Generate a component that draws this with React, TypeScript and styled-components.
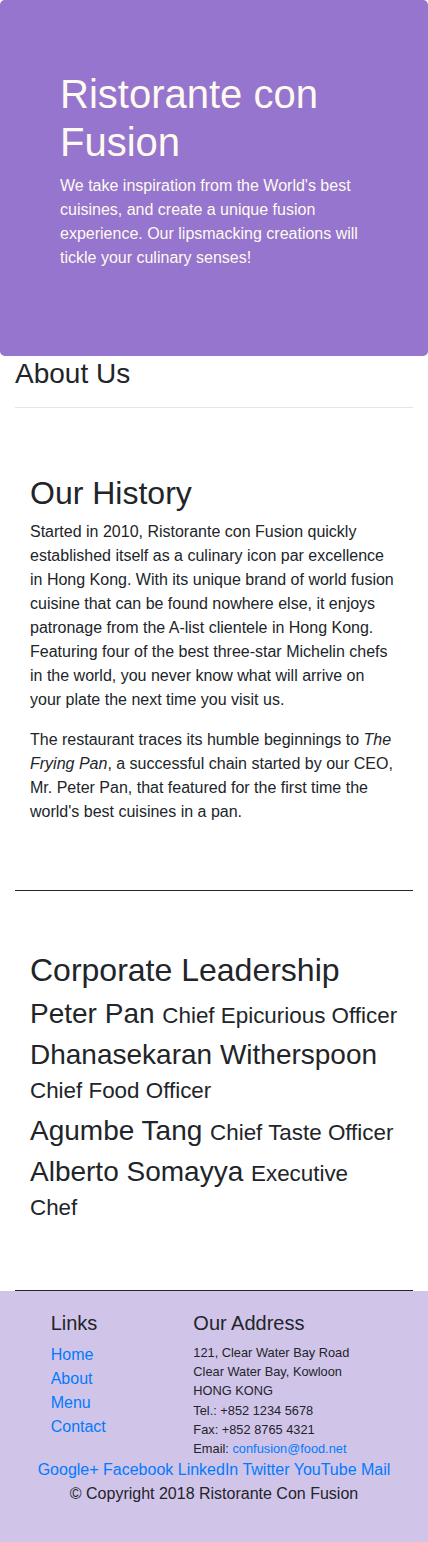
import React from "react";
import styled, { createGlobalStyle } from "styled-components";

const GlobalStyle = createGlobalStyle`
  *, *::before, *::after { box-sizing: border-box; }
  html, body { margin: 0; padding: 0; }
  body {
    font-family: "Liberation Sans", Arial, Helvetica, sans-serif;
    font-size: 16px;
    line-height: 1.5;
    color: #212529;
    background: #fff;
    text-align: left;
  }
`;

const Jumbotron = styled.header`
  background-color: #9575cd;
  color: floralwhite;
  padding: 70px 30px;
  margin: 0 auto 1px;
  border-radius: 4.8px;
`;

const HeaderInner = styled.div`
  padding: 0 30px;
`;

const HeaderTitle = styled.h1`
  margin: 0 0 8px;
  font-size: 40px;
  line-height: 1.2;
  font-weight: 500;
`;

const Lead = styled.p`
  margin: 0 0 16px;
`;

const Container = styled.main`
  padding: 0 15px;
`;

const PageTitle = styled.h3`
  margin: 0 0 8px;
  font-size: 28px;
  line-height: 1.2;
  font-weight: 500;
`;

const Rule = styled.hr`
  box-sizing: content-box;
  height: 0;
  margin: 16px 0;
  border: 0;
  border-top: 1px solid rgba(0, 0, 0, 0.1);
`;

const Section = styled.section<{ $center?: boolean }>`
  display: flex;
  flex-wrap: wrap;
  align-items: ${(p) => (p.$center ? "center" : "stretch")};
  min-height: 400px;
  padding: 50px 0;
  margin: 0 auto;
  border-bottom: 1px solid #212529;
`;

const SectionCol = styled.div`
  width: 100%;
  padding: 0 15px;
`;

const SectionTitle = styled.h2`
  margin: 0 0 8px;
  font-size: 32px;
  line-height: 1.2;
  font-weight: 500;
`;

const Para = styled.p`
  margin: 0 0 16px;
`;

const LeaderName = styled.h3`
  margin: 0 0 8px;
  font-size: 28px;
  line-height: 1.2;
  font-weight: 500;
`;

const Designation = styled.small`
  font-size: 80%;
  font-weight: 400;
`;

const Footer = styled.footer`
  background-color: #d1c4e9;
  padding: 20px 0;
`;

const FooterInner = styled.div`
  padding: 0 15px;
`;

const FooterRow = styled.div`
  display: flex;
  flex-wrap: wrap;
  justify-content: center;
  margin: 0 -15px;
`;

const FooterCol = styled.div<{ $span?: number; $offset?: number; $auto?: boolean }>`
  padding: 0 15px;
  flex: ${(p) => (p.$auto ? "0 0 auto" : `0 0 ${((p.$span ?? 12) / 12) * 100}%`)};
  max-width: ${(p) => (p.$auto ? "none" : `${((p.$span ?? 12) / 12) * 100}%`)};
  margin-left: ${(p) => (p.$offset ? `${(p.$offset / 12) * 100}%` : "0")};
`;

const SocialCol = styled(FooterCol)`
  text-align: center;
  align-self: center;
`;

const FooterHeading = styled.h5`
  margin: 0 0 8px;
  font-size: 20px;
  line-height: 1.2;
  font-weight: 500;
`;

const LinkList = styled.ul`
  list-style: none;
  margin: 0 0 16px;
  padding: 0;
`;

const Link = styled.a`
  color: #007bff;
  text-decoration: none;
`;

const Address = styled.address`
  margin: 0;
  font-style: normal;
  font-size: 12.8px;
  line-height: 1.5;
`;

const Copyright = styled.p`
  margin: 0 0 16px;
`;

const leaders = [
  { name: "Peter Pan", designation: "Chief Epicurious Officer" },
  { name: "Dhanasekaran Witherspoon", designation: "Chief Food Officer" },
  { name: "Agumbe Tang", designation: "Chief Taste Officer" },
  { name: "Alberto Somayya", designation: "Executive Chef" },
];

const social = ["Google+", "Facebook", "LinkedIn", "Twitter", "YouTube", "Mail"];

export default function App() {
  return (
    <>
      <GlobalStyle />
      <Jumbotron>
        <HeaderInner>
          <HeaderTitle>Ristorante con Fusion</HeaderTitle>
          <Lead>
            We take inspiration from the World's best cuisines, and create a unique fusion
            experience. Our lipsmacking creations will tickle your culinary senses!
          </Lead>
        </HeaderInner>
      </Jumbotron>
      <Container>
        <PageTitle>About Us</PageTitle>
        <Rule />
        <Section>
          <SectionCol>
            <SectionTitle>Our History</SectionTitle>
            <Para>
              Started in 2010, Ristorante con Fusion quickly established itself as a culinary
              icon par excellence in Hong Kong. With its unique brand of world fusion cuisine
              that can be found nowhere else, it enjoys patronage from the A-list clientele in
              Hong Kong. Featuring four of the best three-star Michelin chefs in the world, you
              never know what will arrive on your plate the next time you visit us.
            </Para>
            <Para>
              The restaurant traces its humble beginnings to <em>The Frying Pan</em>, a
              successful chain started by our CEO, Mr. Peter Pan, that featured for the first
              time the world's best cuisines in a pan.
            </Para>
          </SectionCol>
        </Section>
        <Section $center>
          <SectionCol>
            <SectionTitle>Corporate Leadership</SectionTitle>
            {leaders.map((l) => (
              <LeaderName key={l.name}>
                {l.name} <Designation>{l.designation}</Designation>
              </LeaderName>
            ))}
          </SectionCol>
        </Section>
      </Container>
      <Footer>
        <FooterInner>
          <FooterRow>
            <FooterCol $span={4} $offset={1}>
              <FooterHeading>Links</FooterHeading>
              <LinkList>
                <li><Link href="#">Home</Link></li>
                <li><Link href="#">About</Link></li>
                <li><Link href="#">Menu</Link></li>
                <li><Link href="#">Contact</Link></li>
              </LinkList>
            </FooterCol>
            <FooterCol $span={7}>
              <FooterHeading>Our Address</FooterHeading>
              <Address>
                121, Clear Water Bay Road
                <br />
                Clear Water Bay, Kowloon
                <br />
                HONG KONG
                <br />
                Tel.: +852 1234 5678
                <br />
                Fax: +852 8765 4321
                <br />
                Email: <Link href="#">confusion@food.net</Link>
              </Address>
            </FooterCol>
            <SocialCol $span={12}>
              {social.map((s, i) => (
                <React.Fragment key={s}>
                  <Link href="#">{s}</Link>
                  {i < social.length - 1 ? " " : null}
                </React.Fragment>
              ))}
            </SocialCol>
          </FooterRow>
          <FooterRow>
            <FooterCol $auto>
              <Copyright>© Copyright 2018 Ristorante Con Fusion</Copyright>
            </FooterCol>
          </FooterRow>
        </FooterInner>
      </Footer>
    </>
  );
}
